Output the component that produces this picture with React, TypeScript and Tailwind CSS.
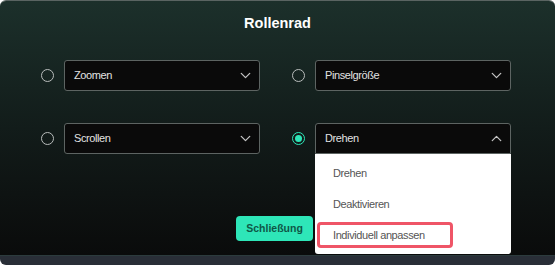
import { ChevronDown, ChevronUp } from 'lucide-react';

const body = { fontFamily: '"Liberation Sans", Arial, sans-serif' };

function Radio({ checked }: { checked?: boolean }) {
  if (checked) {
    return (
      <div className="w-[13px] h-[13px] shrink-0 rounded-full border-[1.5px] border-[#2ee6b8] flex items-center justify-center">
        <div className="w-[7px] h-[7px] rounded-full bg-[#2ee6b8]" />
      </div>
    );
  }
  return <div className="w-[13px] h-[13px] shrink-0 rounded-full border-[1.5px] border-[#b9bdbc]" />;
}

function Select({ value, open }: { value: string; open?: boolean }) {
  return (
    <div className="relative w-[197px]">
      <div
        className={
          'h-[31px] flex items-center justify-between pl-[9px] pr-[5px] bg-[#0a0a0a] border border-[#5d6462] text-[11px] tracking-[-0.4px] text-[#e2e2e2] ' +
          (open ? 'rounded-t-[3px]' : 'rounded-[3px]')
        }
        style={body}
      >
        <span>{value}</span>
        {open ? (
          <ChevronUp size={17} strokeWidth={1.8} className="text-[#c4c4c4]" />
        ) : (
          <ChevronDown size={17} strokeWidth={1.8} className="text-[#c4c4c4]" />
        )}
      </div>
      {open && (
        <div
          className="absolute left-0 right-0 top-full z-10 bg-white rounded-b-[3px] pt-[4px] pb-[3px] text-[11px] tracking-[-0.4px] text-[#555]"
          style={body}
        >
          <div className="h-[31px] flex items-center pl-[18px]">Drehen</div>
          <div className="h-[31px] flex items-center pl-[18px]">Deaktivieren</div>
          <div className="h-[31px] pt-[2px] pl-[2px]">
            <div className="w-[136px] h-[26px] flex items-center pl-[13px] border-[3px] border-[#ef5567] rounded-[4px]">
              Individuell anpassen
            </div>
          </div>
        </div>
      )}
    </div>
  );
}

function Option({ value, checked, open }: { value: string; checked?: boolean; open?: boolean }) {
  return (
    <div className="flex items-center gap-[10px]">
      <Radio checked={checked} />
      <Select value={value} open={open} />
    </div>
  );
}

export default function App() {
  return (
    <div className="w-[555px] h-[265px] bg-white">
      <div className="h-full flex flex-col rounded-[6px] overflow-hidden border-t border-[#5a6462]">
        <div
          className="flex-1 flex flex-col bg-gradient-to-b from-[#1c302b] via-[#121c1a] to-[#0a0b0b]"
          style={body}
        >
          <h1 className="pt-[13px] h-[59px] text-center text-[14.5px] leading-[18px] font-bold text-white">Rollenrad</h1>
          <div className="grid grid-cols-[219px_219px] gap-x-[32px] gap-y-[32px] pl-[41px]">
            <Option value="Zoomen" />
            <Option value="Pinselgröße" />
            <Option value="Scrollen" />
            <Option value="Drehen" checked open />
          </div>
          <div className="flex justify-center pr-[6px] mt-[62px]">
            <button
              type="button"
              className="w-[77px] h-[25px] rounded-[4px] bg-[#2ee6b8] text-[#0e5747] text-[10.5px] font-bold"
            >
              Schließung
            </button>
          </div>
        </div>
        <div className="h-[10px] bg-[#292e37] border-t border-[#2c3b3d]" />
      </div>
    </div>
  );
}
